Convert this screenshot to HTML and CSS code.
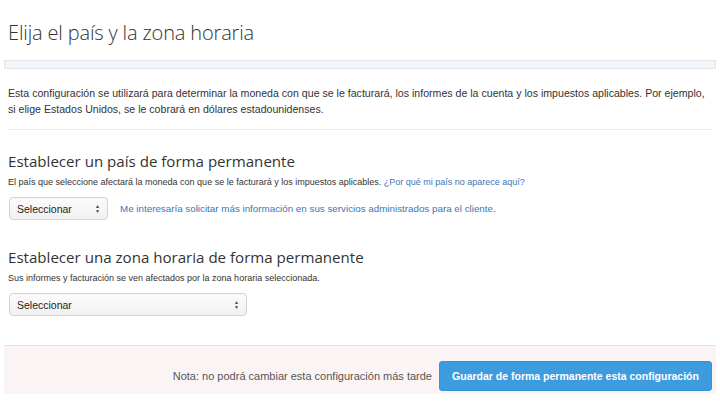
FILE: index.html
```html
<!DOCTYPE html>
<html lang="es">
<head>
<meta charset="utf-8">
<title>Elija el país y la zona horaria</title>
<link rel="stylesheet" href="styles.css">
</head>
<body>
<div class="page">
  <h1 class="title">Elija el país y la zona horaria</h1>
  <div class="band"></div>
  <div class="content">
    <p class="intro">Esta configuración se utilizará para determinar la moneda con que se le facturará, los informes de la cuenta y los impuestos aplicables. Por ejemplo, si elige Estados Unidos, se le cobrará en dólares estadounidenses.</p>
    <section class="section">
      <h2 class="section-title">Establecer un país de forma permanente</h2>
      <p class="hint">El país que seleccione afectará la moneda con que se le facturará y los impuestos aplicables. <a class="link" href="#">¿Por qué mi país no aparece aquí?</a></p>
      <div class="row">
        <div class="select select-short"><span>Seleccionar</span><span class="arrows">&#9650;<br>&#9660;</span></div>
        <a class="link link-row" href="#">Me interesaría solicitar más información en sus servicios administrados para el cliente.</a>
      </div>
    </section>
    <section class="section section-tz">
      <h2 class="section-title">Establecer una zona horaria de forma permanente</h2>
      <p class="hint">Sus informes y facturación se ven afectados por la zona horaria seleccionada.</p>
      <div class="row">
        <div class="select select-long"><span>Seleccionar</span><span class="arrows">&#9650;<br>&#9660;</span></div>
      </div>
    </section>
  </div>
  <div class="footer">
    <span class="note">Nota: no podrá cambiar esta configuración más tarde</span>
    <button class="btn" type="button">Guardar de forma permanente esta configuración</button>
  </div>
</div>
</body>
</html>
```

FILE: styles.css
```css
html, body {
  margin: 0;
  padding: 0;
  background: #ffffff;
}
body {
  font-family: "Liberation Sans", Arial, sans-serif;
  color: #333333;
}
.page {
  padding: 0 4px;
}
.title {
  margin: 0;
  padding: 19px 4px 0 4px;
  height: 41px;
  box-sizing: border-box;
  font-family: "Open Sans", sans-serif;
  font-weight: 300;
  font-size: 20px;
  line-height: 28px;
  color: #333333;
  letter-spacing: -0.15px;
}
.band {
  margin-top: 19px;
  height: 7px;
  border: 1px solid #dfe5ea;
  background: #f3f6f9;
}
.content {
  padding: 0 4px;
}
.intro {
  margin: 0;
  padding: 16px 0 12px 0;
  font-size: 10.6px;
  line-height: 16px;
  color: #333333;
  border-bottom: 1px solid #ebebeb;
}
.section {
  padding-top: 20px;
}
.section-tz {
  padding-top: 26px;
}
.section-title {
  margin: 0;
  font-family: "Open Sans", sans-serif;
  font-weight: 400;
  font-size: 15.1px;
  line-height: 22px;
  color: #333333;
}
.hint {
  margin: 3px 0 0 0;
  font-size: 9px;
  line-height: 14px;
  color: #333333;
}
.link {
  color: #3a78b5;
  text-decoration: none;
}
.row {
  display: flex;
  align-items: center;
  gap: 12px;
  margin-top: 8px;
}
.link-row {
  font-size: 9.8px;
}
.select {
  display: flex;
  align-items: center;
  justify-content: space-between;
  box-sizing: border-box;
  height: 23px;
  margin-left: 1px;
  padding: 0 7px 0 7px;
  border: 1px solid #d3d3d3;
  border-radius: 4px;
  background: linear-gradient(#fbfbfb, #f1f1f1);
  font-size: 10.5px;
  color: #222222;
}
.select-short {
  width: 99px;
}
.select-long {
  width: 238px;
}
.arrows {
  font-size: 5px;
  line-height: 5px;
  color: #444444;
  text-align: center;
}
.footer {
  display: flex;
  justify-content: flex-end;
  align-items: center;
  gap: 7px;
  margin-top: 29px;
  padding: 15px 4px 3px 4px;
  border-top: 1px solid #e3e3e3;
  background: #faf5f4;
}
.note {
  font-size: 11px;
  color: #555555;
}
.btn {
  height: 30px;
  width: 273px;
  padding: 0;
  border: 1px solid #3a92d3;
  border-radius: 3px;
  background: #3d9be0;
  color: #ffffff;
  font-family: "Liberation Sans", Arial, sans-serif;
  font-weight: bold;
  font-size: 10.5px;
}
```
